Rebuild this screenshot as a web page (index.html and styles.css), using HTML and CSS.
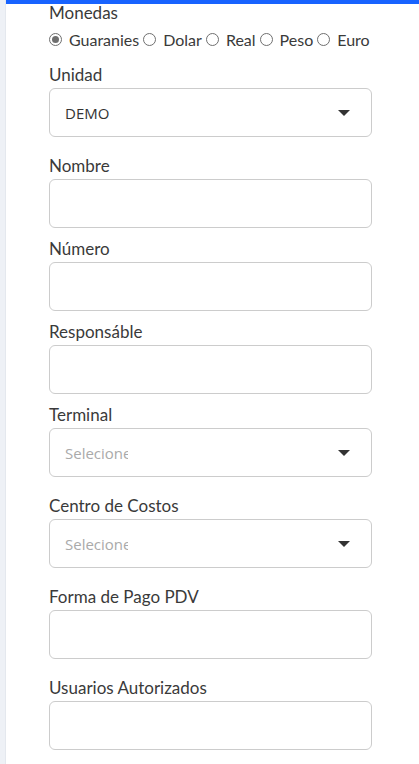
FILE: index.html
```html
<!DOCTYPE html>
<html lang="es">
<head>
    <meta charset="UTF-8">
    <meta name="viewport" content="width=device-width, initial-scale=1.0">
    <title>Caja</title>
    <link rel="stylesheet" href="styles.css">
</head>
<body>
    <div class="page">
        <div class="rail"></div>
        <div class="content">
            <div class="topbar"></div>
            <form class="form">
                <div class="group">
                    <label class="label">Monedas</label>
                    <div class="radios">
                        <span class="radio checked"></span><span class="radio-text">Guaranies</span>
                        <span class="radio"></span><span class="radio-text">Dolar</span>
                        <span class="radio"></span><span class="radio-text">Real</span>
                        <span class="radio"></span><span class="radio-text">Peso</span>
                        <span class="radio"></span><span class="radio-text">Euro</span>
                    </div>
                </div>
                <div class="group wide">
                    <label class="label">Unidad</label>
                    <div class="field select">
                        <span class="value">DEMO</span>
                        <span class="caret"></span>
                    </div>
                </div>
                <div class="group">
                    <label class="label">Nombre</label>
                    <div class="field"></div>
                </div>
                <div class="group">
                    <label class="label">Número</label>
                    <div class="field"></div>
                </div>
                <div class="group">
                    <label class="label">Responsáble</label>
                    <div class="field"></div>
                </div>
                <div class="group wide">
                    <label class="label">Terminal</label>
                    <div class="field select">
                        <span class="placeholder">Selecione</span>
                        <span class="caret"></span>
                    </div>
                </div>
                <div class="group wide">
                    <label class="label">Centro de Costos</label>
                    <div class="field select">
                        <span class="placeholder">Selecione</span>
                        <span class="caret"></span>
                    </div>
                </div>
                <div class="group wide">
                    <label class="label">Forma de Pago PDV</label>
                    <div class="field"></div>
                </div>
                <div class="group">
                    <label class="label">Usuarios Autorizados</label>
                    <div class="field"></div>
                </div>
            </form>
        </div>
    </div>
</body>
</html>
```

FILE: styles.css
```css
body { margin: 0; background: #fff; font-family: Lato, "Open Sans", sans-serif; color: #333; }
.page { display: flex; min-height: 764px; }
.rail { width: 5px; flex-shrink: 0; background: #eef1f6; border-right: 1px solid #e4e8ee; }
.content { flex: 1; }
.topbar { height: 4px; background: #1763ff; }
.form { padding: 0 0 0 43px; width: 323px; }
.group { margin-bottom: 10px; }
.group.wide { margin-bottom: 18px; }
.group:first-child { margin-bottom: 0; }
.label { display: block; font-size: 17px; line-height: 22px; margin-bottom: 2px; color: #3a3a3a; }
.group:first-child .label { margin-bottom: 4px; margin-top: -2px; }
.radios { display: flex; align-items: center; height: 22px; font-size: 16px; margin-bottom: 14px; }
.radio { width: 11px; height: 11px; border: 1px solid #6f6f6f; border-radius: 50%; flex-shrink: 0; margin-right: 7px; position: relative; }
.radio.checked::after { content: ""; position: absolute; left: 2px; top: 2px; width: 7px; height: 7px; border-radius: 50%; background: #6f6f6f; }
.radio-text { margin-right: 4px; color: #3a3a3a; }
.field { height: 47px; border: 1px solid #ccc; border-radius: 6px; background: #fff; box-sizing: content-box; }
.select { display: flex; align-items: center; padding: 0 21px 0 15px; height: 47px; width: 285px; }
.value { font-family: "Open Sans", sans-serif; font-size: 15px; color: #333; flex: 1; }
.placeholder { font-family: "Open Sans", sans-serif; font-size: 15px; color: #aaa; width: 63px; overflow: hidden; white-space: nowrap; margin-right: auto; }
.caret { width: 0; height: 0; border-left: 6px solid transparent; border-right: 6px solid transparent; border-top: 6px solid #333; }
```
